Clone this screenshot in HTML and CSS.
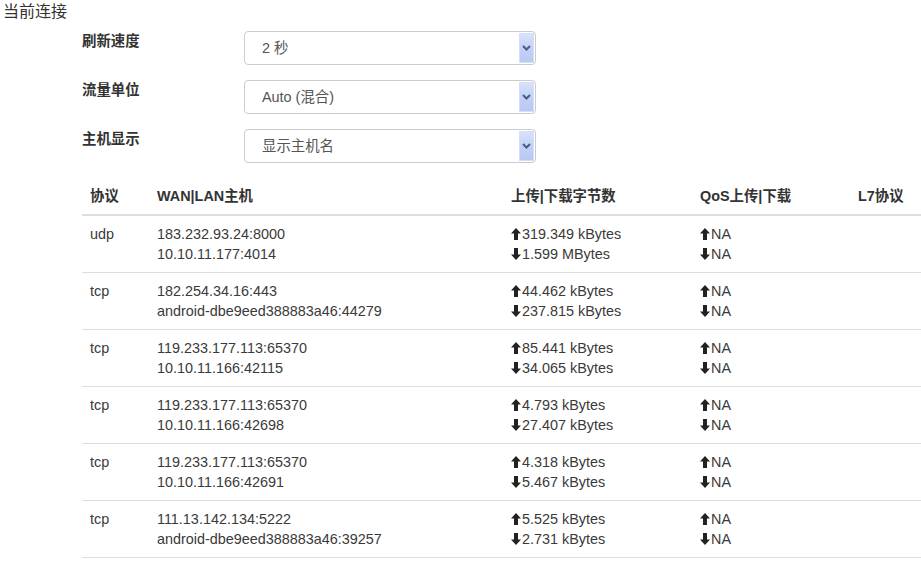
FILE: index.html
```html
<!DOCTYPE html>
<html lang="zh">
<head>
<meta charset="utf-8">
<title>当前连接</title>
<link rel="stylesheet" href="styles.css">
</head>
<body>
<div class="page">
  <div class="legend">当前连接</div>
  <div class="form">
    <div class="form-row">
      <div class="label">刷新速度</div>
      <div class="select"><span class="select-text">2 秒</span><span class="select-btn"><svg width="9" height="6" viewBox="0 0 9 6"><path d="M1 1 L4.5 4.5 L8 1" fill="none" stroke="#4b5b84" stroke-width="2"/></svg></span></div>
    </div>
    <div class="form-row">
      <div class="label">流量单位</div>
      <div class="select"><span class="select-text">Auto (混合)</span><span class="select-btn"><svg width="9" height="6" viewBox="0 0 9 6"><path d="M1 1 L4.5 4.5 L8 1" fill="none" stroke="#4b5b84" stroke-width="2"/></svg></span></div>
    </div>
    <div class="form-row">
      <div class="label">主机显示</div>
      <div class="select"><span class="select-text">显示主机名</span><span class="select-btn"><svg width="9" height="6" viewBox="0 0 9 6"><path d="M1 1 L4.5 4.5 L8 1" fill="none" stroke="#4b5b84" stroke-width="2"/></svg></span></div>
    </div>
  </div>
  <div class="table-wrap">
    <table class="conn">
      <colgroup>
        <col class="c1"><col class="c2"><col class="c3"><col class="c4"><col class="c5">
      </colgroup>
      <thead>
        <tr><th>协议</th><th>WAN|LAN主机</th><th>上传|下载字节数</th><th>QoS上传|下载</th><th>L7协议</th></tr>
      </thead>
      <tbody>
        <tr>
          <td>udp</td>
          <td>183.232.93.24:8000<br>10.10.11.177:4014</td>
          <td><svg class="ar" viewBox="0 0 10 12"><path d="M5 0 L10 5.5 L7 5.5 L7 12 L3 12 L3 5.5 L0 5.5 Z"/></svg>319.349 kBytes<br><svg class="ar" viewBox="0 0 10 12"><path d="M5 12 L10 6.5 L7 6.5 L7 0 L3 0 L3 6.5 L0 6.5 Z"/></svg>1.599 MBytes</td>
          <td><svg class="ar" viewBox="0 0 10 12"><path d="M5 0 L10 5.5 L7 5.5 L7 12 L3 12 L3 5.5 L0 5.5 Z"/></svg>NA<br><svg class="ar" viewBox="0 0 10 12"><path d="M5 12 L10 6.5 L7 6.5 L7 0 L3 0 L3 6.5 L0 6.5 Z"/></svg>NA</td>
          <td></td>
        </tr>
        <tr>
          <td>tcp</td>
          <td>182.254.34.16:443<br>android-dbe9eed388883a46:44279</td>
          <td><svg class="ar" viewBox="0 0 10 12"><path d="M5 0 L10 5.5 L7 5.5 L7 12 L3 12 L3 5.5 L0 5.5 Z"/></svg>44.462 kBytes<br><svg class="ar" viewBox="0 0 10 12"><path d="M5 12 L10 6.5 L7 6.5 L7 0 L3 0 L3 6.5 L0 6.5 Z"/></svg>237.815 kBytes</td>
          <td><svg class="ar" viewBox="0 0 10 12"><path d="M5 0 L10 5.5 L7 5.5 L7 12 L3 12 L3 5.5 L0 5.5 Z"/></svg>NA<br><svg class="ar" viewBox="0 0 10 12"><path d="M5 12 L10 6.5 L7 6.5 L7 0 L3 0 L3 6.5 L0 6.5 Z"/></svg>NA</td>
          <td></td>
        </tr>
        <tr>
          <td>tcp</td>
          <td>119.233.177.113:65370<br>10.10.11.166:42115</td>
          <td><svg class="ar" viewBox="0 0 10 12"><path d="M5 0 L10 5.5 L7 5.5 L7 12 L3 12 L3 5.5 L0 5.5 Z"/></svg>85.441 kBytes<br><svg class="ar" viewBox="0 0 10 12"><path d="M5 12 L10 6.5 L7 6.5 L7 0 L3 0 L3 6.5 L0 6.5 Z"/></svg>34.065 kBytes</td>
          <td><svg class="ar" viewBox="0 0 10 12"><path d="M5 0 L10 5.5 L7 5.5 L7 12 L3 12 L3 5.5 L0 5.5 Z"/></svg>NA<br><svg class="ar" viewBox="0 0 10 12"><path d="M5 12 L10 6.5 L7 6.5 L7 0 L3 0 L3 6.5 L0 6.5 Z"/></svg>NA</td>
          <td></td>
        </tr>
        <tr>
          <td>tcp</td>
          <td>119.233.177.113:65370<br>10.10.11.166:42698</td>
          <td><svg class="ar" viewBox="0 0 10 12"><path d="M5 0 L10 5.5 L7 5.5 L7 12 L3 12 L3 5.5 L0 5.5 Z"/></svg>4.793 kBytes<br><svg class="ar" viewBox="0 0 10 12"><path d="M5 12 L10 6.5 L7 6.5 L7 0 L3 0 L3 6.5 L0 6.5 Z"/></svg>27.407 kBytes</td>
          <td><svg class="ar" viewBox="0 0 10 12"><path d="M5 0 L10 5.5 L7 5.5 L7 12 L3 12 L3 5.5 L0 5.5 Z"/></svg>NA<br><svg class="ar" viewBox="0 0 10 12"><path d="M5 12 L10 6.5 L7 6.5 L7 0 L3 0 L3 6.5 L0 6.5 Z"/></svg>NA</td>
          <td></td>
        </tr>
        <tr>
          <td>tcp</td>
          <td>119.233.177.113:65370<br>10.10.11.166:42691</td>
          <td><svg class="ar" viewBox="0 0 10 12"><path d="M5 0 L10 5.5 L7 5.5 L7 12 L3 12 L3 5.5 L0 5.5 Z"/></svg>4.318 kBytes<br><svg class="ar" viewBox="0 0 10 12"><path d="M5 12 L10 6.5 L7 6.5 L7 0 L3 0 L3 6.5 L0 6.5 Z"/></svg>5.467 kBytes</td>
          <td><svg class="ar" viewBox="0 0 10 12"><path d="M5 0 L10 5.5 L7 5.5 L7 12 L3 12 L3 5.5 L0 5.5 Z"/></svg>NA<br><svg class="ar" viewBox="0 0 10 12"><path d="M5 12 L10 6.5 L7 6.5 L7 0 L3 0 L3 6.5 L0 6.5 Z"/></svg>NA</td>
          <td></td>
        </tr>
        <tr>
          <td>tcp</td>
          <td>111.13.142.134:5222<br>android-dbe9eed388883a46:39257</td>
          <td><svg class="ar" viewBox="0 0 10 12"><path d="M5 0 L10 5.5 L7 5.5 L7 12 L3 12 L3 5.5 L0 5.5 Z"/></svg>5.525 kBytes<br><svg class="ar" viewBox="0 0 10 12"><path d="M5 12 L10 6.5 L7 6.5 L7 0 L3 0 L3 6.5 L0 6.5 Z"/></svg>2.731 kBytes</td>
          <td><svg class="ar" viewBox="0 0 10 12"><path d="M5 0 L10 5.5 L7 5.5 L7 12 L3 12 L3 5.5 L0 5.5 Z"/></svg>NA<br><svg class="ar" viewBox="0 0 10 12"><path d="M5 12 L10 6.5 L7 6.5 L7 0 L3 0 L3 6.5 L0 6.5 Z"/></svg>NA</td>
          <td></td>
        </tr>
      </tbody>
    </table>
  </div>
</div>
</body>
</html>
```

FILE: styles.css
```css
html, body {
  margin: 0;
  padding: 0;
  background: #fff;
  overflow: hidden;
}
body {
  font-family: "Liberation Sans", Arial, "Noto Sans CJK SC", sans-serif;
  font-size: 14.4px;
  line-height: 20px;
  color: #333;
}
.page {
  width: 921px;
  overflow: hidden;
}
.legend {
  font-size: 16px;
  line-height: 24px;
  padding-left: 3px;
  color: #333;
}
.form {
  display: flex;
  flex-direction: column;
  gap: 15px;
  padding: 7px 0 0 82px;
}
.form-row {
  display: flex;
  align-items: flex-start;
}
.label {
  width: 162px;
  font-weight: bold;
  padding-top: 0;
}
.select {
  width: 292px;
  height: 34px;
  box-sizing: border-box;
  border: 1px solid #ccc;
  border-radius: 4px;
  display: flex;
  align-items: center;
  justify-content: space-between;
  padding: 1px 1px 1px 17px;
  color: #555;
  background: #fff;
}
.select-text {
  font-size: 14.4px;
}
.select-btn {
  width: 15px;
  height: 30px;
  box-sizing: border-box;
  border: 1px solid #d4def7;
  background: linear-gradient(to bottom, #d7e2fb 0%, #c2d1f6 50%, #b9c9f3 100%);
  display: flex;
  align-items: center;
  justify-content: center;
}
.table-wrap {
  padding: 15px 0 0 82px;
}
.conn {
  border-collapse: collapse;
  table-layout: fixed;
  width: 900px;
}
.c1 { width: 67px; }
.c2 { width: 354px; }
.c3 { width: 189px; }
.c4 { width: 158px; }
.c5 { width: 132px; }
.conn th {
  text-align: left;
  font-weight: bold;
  padding: 8px;
  border-bottom: 2px solid #ddd;
  white-space: nowrap;
}
.conn td {
  padding: 8px;
  border-bottom: 1px solid #ddd;
  vertical-align: top;
  white-space: nowrap;
  color: #3a3a3a;
}
.ar {
  width: 10px;
  height: 12px;
  fill: #222;
  vertical-align: -1px;
  margin-right: 1px;
}
```
